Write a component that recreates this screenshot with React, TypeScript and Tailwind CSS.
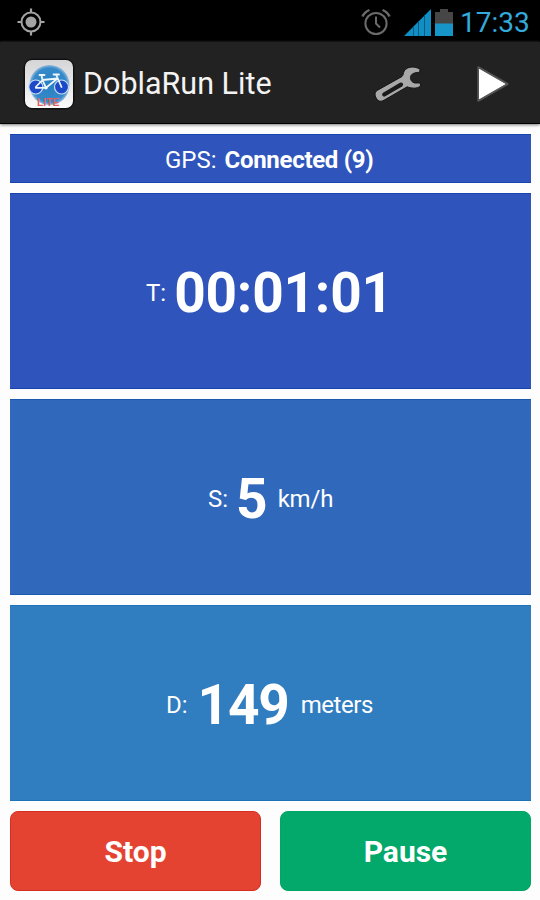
import type { ReactNode } from 'react';

function GpsIcon() {
  return (
    <svg width="30" height="30" viewBox="0 0 30 30" fill="none" stroke="#a3a3a3">
      <circle cx="15" cy="15" r="9.5" strokeWidth="2" />
      <circle cx="15" cy="15" r="5.5" fill="#a3a3a3" stroke="none" />
      <path d="M15 1.5v4.5M15 24v4.5M1.5 15H6M24 15h4.5" strokeWidth="2.2" />
    </svg>
  );
}

function AlarmIcon() {
  return (
    <svg width="30" height="28" viewBox="0 0 30 28" fill="none" stroke="#6b6b6b" strokeWidth="2">
      <circle cx="15" cy="15.5" r="10.6" />
      <path d="M15 8.5V15.5L19 19.5" />
      <path d="M1.5 8.5Q3.5 4 8.5 2M28.5 8.5Q26.5 4 21.5 2" strokeWidth="2.4" />
    </svg>
  );
}

function SignalIcon() {
  return (
    <svg width="27" height="27" viewBox="0 0 27 27">
      <path d="M0 27L27 0V27Z" fill="#118fc4" />
      <path d="M9.5 17V27M14.5 12V27M20.5 6V27" stroke="#075b80" strokeWidth="1" />
    </svg>
  );
}

function BatteryIcon() {
  return (
    <svg width="18" height="27" viewBox="0 0 18 27">
      <path d="M0 3H5V0H13V3H18V15H0Z" fill="#464646" />
      <path d="M0 14.5H18V27H0Z" fill="#1595c8" />
    </svg>
  );
}

function BikeLogo() {
  return (
    <svg width="52" height="52" viewBox="0 0 52 52">
      <defs>
        <linearGradient id="tile" x1="0" y1="0" x2="0" y2="1">
          <stop offset="0" stopColor="#d5d5d7" />
          <stop offset="1" stopColor="#fafafa" />
        </linearGradient>
        <radialGradient id="globe">
          <stop offset="0" stopColor="#287fc0" />
          <stop offset=".85" stopColor="#368aca" />
          <stop offset="1" stopColor="#8fb9dc" />
        </radialGradient>
      </defs>
      <rect x="0.5" y="0.5" width="51" height="51" rx="9" fill="#101010" />
      <rect x="2" y="2" width="48" height="48" rx="7" fill="url(#tile)" />
      <circle cx="26.5" cy="27" r="20" fill="url(#globe)" />
      <g fill="#1b49c8" stroke="#c9dcf4" strokeWidth="1.2">
        <circle cx="12.8" cy="29" r="7" />
        <circle cx="38.5" cy="29" r="7" />
      </g>
      <path
        d="M12.8 29L19.5 22L23 29.8H12.8M23 29.8L34.5 20.5L19.5 22L18.5 17.5M16.5 17H21.5M38.5 29L33 16.5H30.5M33 16.5H36"
        fill="none"
        stroke="#edf5fd"
        strokeWidth="1.8"
        strokeLinejoin="round"
        strokeLinecap="round"
      />
      <circle cx="23" cy="29.8" r="1.8" fill="#edf5fd" />
      <text
        x="14"
        y="47.5"
        textLength="22.5"
        lengthAdjust="spacingAndGlyphs"
        fill="#e0625c"
        fontSize="10"
        fontWeight="bold"
        fontFamily="Liberation Sans, sans-serif"
      >
        LITE
      </text>
    </svg>
  );
}

function WrenchIcon() {
  return (
    <svg width="50" height="38" viewBox="0 0 50 38">
      <path
        d="M46 4.2C41 1 33 1.3 30.2 6C29.2 8 29.4 10 28 11.5L3.6 25.2C0.6 27 0.4 30.2 2.3 33.2C4.2 36.4 6.7 37 10 35.2L33.2 21.8C36.5 23.2 43 24.2 46.5 21L46.3 18H41C37.8 17.5 35.8 14.3 36.6 11.4C37.6 8.6 40.5 7.5 45.7 7.3Z"
        fill="#a8a8a8"
        stroke="#151515"
        strokeWidth="1"
      />
      <path d="M10.2 29.5L27 19.6" fill="none" stroke="#1a1a1a" strokeWidth="4.2" strokeLinecap="round" />
    </svg>
  );
}

function PlayIcon() {
  return (
    <svg width="34" height="38" viewBox="0 0 34 38">
      <path d="M2.5 2.5L31.5 19L2.5 35.5Z" fill="#fff" stroke="#555" strokeWidth="2.4" strokeLinejoin="round" />
      <path d="M3 3.8L29.5 19L3 34.2Z" fill="#fff" />
    </svg>
  );
}

interface PanelProps {
  className: string;
  children: ReactNode;
}

function Panel({ className, children }: PanelProps) {
  return <div className={`flex items-center whitespace-nowrap text-white ${className}`}>{children}</div>;
}

export default function App() {
  return (
    <div className="flex h-[900px] w-[540px] flex-col bg-[#fdfdfd] font-['Roboto',sans-serif]">
      <div className="flex h-[42px] shrink-0 items-center bg-black pt-[2px] pl-[16px]">
        <GpsIcon />
        <div className="ml-[315px]">
          <AlarmIcon />
        </div>
        <div className="ml-[13px]">
          <SignalIcon />
        </div>
        <div className="ml-[4px]">
          <BatteryIcon />
        </div>
        <span className="ml-[7px] pt-px text-[28px] leading-none text-[#33a9dc]">17:33</span>
      </div>

      <div className="flex h-[82px] shrink-0 items-center border-b border-black bg-[#222] pt-[2px] pl-[23px] shadow-[0_1px_3px_#777]">
        <BikeLogo />
        <h1 className="ml-[8px] w-[189px] pt-[2px] text-[30.5px] leading-none whitespace-nowrap text-[#f3f3f3]">DoblaRun Lite</h1>
        <div className="ml-[102px]">
          <WrenchIcon />
        </div>
        <div className="ml-[52px]">
          <PlayIcon />
        </div>
      </div>

      <div className="flex flex-col gap-[10px] pt-[10px] pr-[9px] pl-[10px] text-[24px] leading-none">
        <Panel className="h-[49px] border-y border-[#1744ae] bg-[#2f55bd] pt-[3px] pl-[155px]">
          <span>GPS:</span>
          <span className="ml-[8px] font-bold tracking-[-0.3px]">Connected (9)</span>
        </Panel>
        <Panel className="h-[196px] border-y border-[#1744ae] bg-[#2f55bd] pt-[4px] pl-[136px]">
          <span>T:</span>
          <span className="ml-[8px] text-[55px] font-bold tracking-[-0.2px]">00:01:01</span>
        </Panel>
        <Panel className="h-[196px] border-y border-[#195aae] bg-[#3069bc] pt-[4px] pl-[198px]">
          <span>S:</span>
          <span className="ml-[8px] text-[55px] font-bold">5</span>
          <span className="ml-[10px] tracking-[-0.2px]">km/h</span>
        </Panel>
        <Panel className="h-[196px] border-y border-[#1c73b7] bg-[#307dc0] pt-[4px] pl-[156px]">
          <span>D:</span>
          <span className="ml-[10px] text-[55px] font-bold tracking-[-1.2px]">149</span>
          <span className="ml-[12px] tracking-[-0.45px]">meters</span>
        </Panel>
        <div className="grid grid-cols-2 gap-[19px] text-[30px] font-bold text-white">
          <button className="h-[80px] rounded-[8px] border border-[#d52e23] bg-[#e44332] pt-[2px]">Stop</button>
          <button className="h-[80px] rounded-[8px] border border-[#00a665] bg-[#03a86b] pt-[2px]">Pause</button>
        </div>
      </div>
    </div>
  );
}
